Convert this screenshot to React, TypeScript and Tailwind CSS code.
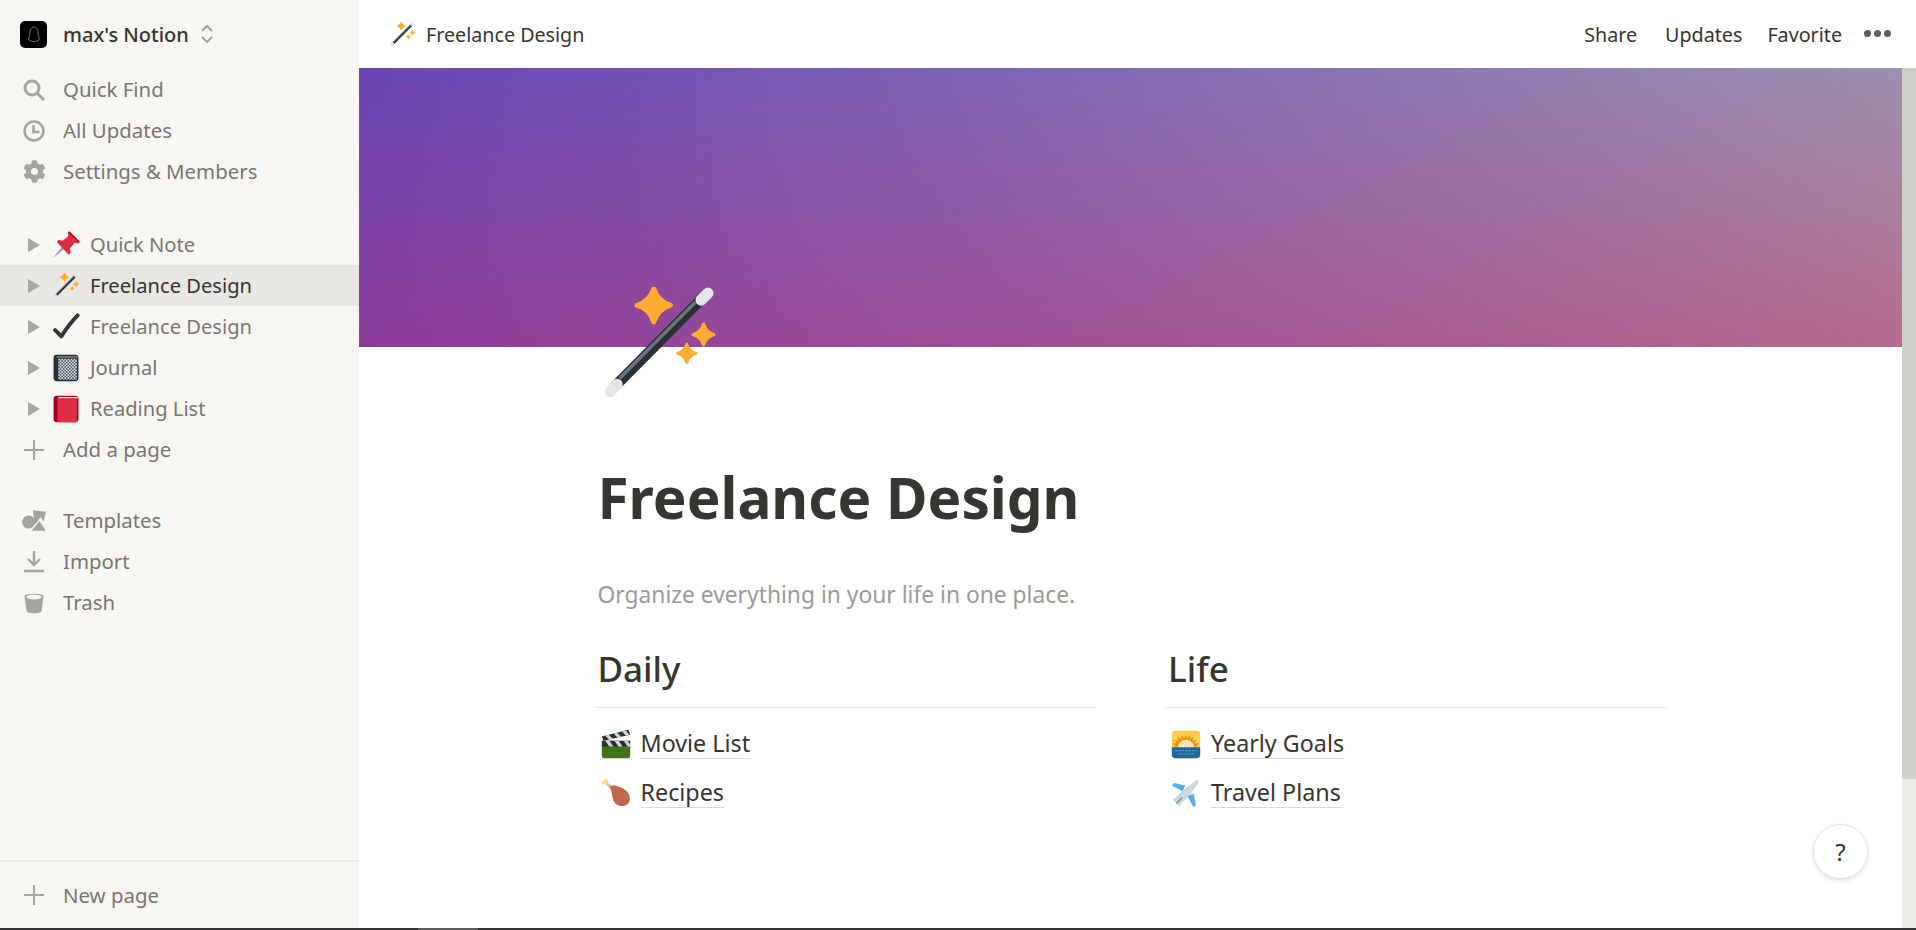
import type { ReactNode } from "react";
import { FaCog } from "react-icons/fa";

const Star = ({ x, y, r }: { x: number; y: number; r: number }) => {
  const k = r * 0.24;
  return (
    <path
      d={`M${x} ${y - r}Q${x + k} ${y - k} ${x + r} ${y}Q${x + k} ${y + k} ${x} ${y + r}Q${x - k} ${y + k} ${x - r} ${y}Q${x - k} ${y - k} ${x} ${y - r}Z`}
      fill="#ffac33"
      stroke="#ffac33"
      strokeWidth={r * 0.28}
      strokeLinejoin="round"
    />
  );
};

const Wand = ({ className }: { className: string }) => (
  <svg viewBox="0 0 36 36" className={className}>
    <line x1="3.2" y1="32.2" x2="31.8" y2="3.4" stroke="#292f33" strokeWidth="3.4" />
    <line x1="5" y1="29.4" x2="29.4" y2="4.8" stroke="#66757f" strokeWidth="1.1" />
    <line x1="2" y1="33.6" x2="4.2" y2="31.3" stroke="#e1e8ed" strokeWidth="3.6" strokeLinecap="round" />
    <line x1="31.2" y1="4.2" x2="33.4" y2="2" stroke="#e1e8ed" strokeWidth="3.6" strokeLinecap="round" />
    <Star x={16} y={5.9} r={5.4} />
    <Star x={32} y={15.3} r={3.4} />
    <Star x={26.6} y={21.3} r={3} />
  </svg>
);

const Pin = () => (
  <svg viewBox="0 0 36 36" className="w-[28px] h-[28px]">
    <path d="M1 35l12-15 3 3z" fill="#99aab5" />
    <path d="M23 1l12 12c1 1.500 0 3-2 3l-4-.5-6 7 1 5c0 2-2 3-3.500 2L7 15c-1-1.500 0-3.500 2-3.500l5 1 7-6-.5-4.500C20.500 1 22 0 23 1z" fill="#dd2e44" />
    <path d="M23 1l12 12c.5 1 .3 2-.5 2.500L20.700 3C21 1.500 22 .5 23 1z" fill="#be1931" />
  </svg>
);

const Check = () => (
  <svg viewBox="0 0 36 36" className="w-[28px] h-[28px]">
    <path d="M4 22l8 8C19 19 25 11 33 3" fill="none" stroke="#31373d" strokeWidth="5" strokeLinecap="round" strokeLinejoin="round" />
  </svg>
);

const Notebook = () => (
  <svg viewBox="0 0 36 36" className="w-[28px] h-[28px]">
    <defs>
      <pattern id="nb" width="4" height="4" patternUnits="userSpaceOnUse">
        <rect width="4" height="4" fill="#d5dde2" />
        <rect width="2" height="2" fill="#4f5b63" />
        <rect x="2" y="2" width="2" height="2" fill="#4f5b63" />
      </pattern>
    </defs>
    <rect x="2" y="1" width="32" height="34" rx="4" fill="#292f33" />
    <rect x="8" y="6" width="24" height="27" fill="url(#nb)" />
    <rect x="6" y="2.500" width="27" height="2.500" fill="#66757f" />
  </svg>
);

const RedBook = () => (
  <svg viewBox="0 0 36 36" className="w-[28px] h-[28px]">
    <rect x="2" y="1" width="32" height="34" rx="4" fill="#a0041e" />
    <rect x="8" y="2.500" width="25" height="2" fill="#ffd9d9" />
    <path d="M7 4.500h25V35H10a3 3 0 01-3-3z" fill="#dd2e44" />
  </svg>
);

const Clapper = () => (
  <svg viewBox="0 0 36 36" className="w-[30px] h-[30px]">
    <path d="M1 20h34v12a3 3 0 01-3 3H4a3 3 0 01-3-3z" fill="#3e721d" />
    <path d="M1 14h34v7H1z" fill="#292f33" />
    <path d="M5 14l5 7h5l-5-7zM16 14l5 7h5l-5-7zM27 14l5 7h3v-2l-3-5z" fill="#ccd6dd" />
    <path d="M1 9L33 1l2 6L3 14z" fill="#292f33" />
    <path d="M5 8l5 5 4.500-1-5-5zM15 5.500l5 5 4.500-1-5-5zM25 3l5 5 4-1-4-5z" fill="#ccd6dd" />
  </svg>
);

const Drumstick = () => (
  <svg viewBox="0 0 36 36" className="w-[30px] h-[30px]">
    <path d="M5 5l9 8" stroke="#f4c58a" strokeWidth="3.400" />
    <circle cx="3.500" cy="5.500" r="2.400" fill="#ffd983" />
    <circle cx="6" cy="3.500" r="2.400" fill="#ffd983" />
    <path d="M10 10c6-3 15 1 21 6 5 5 5 13 0 16-5 3-13 2-16-5-2-6-2-12-5-17z" fill="#c1694f" />
  </svg>
);

const Sunrise = () => (
  <svg viewBox="0 0 36 36" className="w-[30px] h-[30px]">
    <rect x="1" y="2" width="34" height="33" rx="4" fill="#ffcc4d" />
    <path d="M18 7l1.500 4 3-3.500.5 4.500 4-2.500-1 4.500 4.500-1-2 4 4.500.5-3 4H5l-3-4 4.500-.5-2-4 4.500 1-1-4.500 4 2.500.5-4.500 3 3.500z" fill="#f4900c" />
    <path d="M8 23a10 10 0 0120 0z" fill="#ffe8b6" />
    <path d="M1 22h34v9a4 4 0 01-4 4H5a4 4 0 01-4-4z" fill="#226699" />
    <path d="M5 26h26M8 30h20" stroke="#55acee" strokeWidth="1" strokeDasharray="3 1" />
  </svg>
);

const Plane = () => (
  <svg viewBox="0 0 36 36" className="w-[30px] h-[30px]">
    <path d="M30 3c3-1 4 0 3 3L22 21 12 31l-2 3-2-2-4-4-2-2 3-2 10-10z" fill="#ccd6dd" />
    <path d="M17 9L4 6 1 9l13 7zM27 19l3 13-3 3-7-13z" fill="#55acee" />
    <path d="M13 23l-7 7 1 1 7-7z" fill="#66757f" />
  </svg>
);

const SearchIcon = () => (
  <svg viewBox="0 0 24 24" className="w-[24px] h-[24px]" fill="none" stroke="#a5a4a0" strokeWidth="3">
    <circle cx="10" cy="10" r="7" />
    <path d="M15 15l7 7" />
  </svg>
);

const ClockIcon = () => (
  <svg viewBox="0 0 24 24" className="w-[24px] h-[24px]" fill="none" stroke="#a5a4a0" strokeWidth="2.500">
    <circle cx="12" cy="12" r="9.500" />
    <path d="M11.500 6v7h6" />
  </svg>
);

const PlusIcon = () => (
  <svg viewBox="0 0 24 24" className="w-[24px] h-[24px]" fill="none" stroke="#a5a4a0" strokeWidth="2">
    <path d="M12 2v20M2 12h20" />
  </svg>
);

const TemplatesIcon = () => (
  <svg viewBox="0 0 24 24" className="w-[26px] h-[26px]" fill="#a5a4a0">
    <circle cx="7" cy="13" r="6" />
    <path d="M11 2l12 1.500-2 9-3-4-5 7-1-5z" />
    <path d="M17 12l6 9H10z" />
  </svg>
);

const ImportIcon = () => (
  <svg viewBox="0 0 24 24" className="w-[24px] h-[24px]" fill="none" stroke="#a5a4a0" strokeWidth="2.400">
    <path d="M12 1v13M6 9l6 6 6-6M2 21h20" />
  </svg>
);

const TrashIcon = () => (
  <svg viewBox="0 0 24 24" className="w-[24px] h-[24px]">
    <path d="M2.500 5c0-3 19-3 19 0l-2 15c-.5 3-14.500 3-15 0z" fill="#a5a4a0" />
    <ellipse cx="12" cy="6" rx="7.500" ry="2.500" fill="#f7f6f3" />
  </svg>
);

const Arrow = () => (
  <span className="w-0 h-0 border-y-[7px] border-y-transparent border-l-[12px] border-l-[#a8a7a3]" />
);

const NavRow = ({ icon, label }: { icon: ReactNode; label: string }) => (
  <div className="h-[41px] flex items-center pl-[21px] text-[#787672]">
    <span className="w-[26px] flex justify-center">{icon}</span>
    <span className="ml-[16px]">{label}</span>
  </div>
);

const PageRow = ({ icon, label, active }: { icon: ReactNode; label: string; active?: boolean }) => (
  <div className={`h-[41px] flex items-center pl-[28px] text-[20.15px] ${active ? "bg-[#e8e7e4] text-[#37352f]" : "text-[#787672]"}`}>
    <Arrow />
    <span className="w-[28px] ml-[12px] flex justify-center">{icon}</span>
    <span className="ml-[10px]">{label}</span>
  </div>
);

const LinkRow = ({ icon, label }: { icon: ReactNode; label: string }) => (
  <div className="h-[49px] flex items-center pl-[6px]">
    <span className="w-[30px] flex justify-center">{icon}</span>
    <span className="ml-[10px] text-[23.3px] leading-[30px] text-[#37352f] border-b border-[#d9d9d6]">{label}</span>
  </div>
);

const Column = ({ title, children }: { title: string; children: ReactNode }) => (
  <div>
    <h2 className="pl-[3px] h-[50px] text-[35px] leading-[50px] font-medium text-[#37352f]">{title}</h2>
    <div className="mt-[13px] mb-[11px] h-px bg-[#e9e9e7]" />
    {children}
  </div>
);

export default function App() {
  return (
    <div className="w-[1916px] h-[930px] overflow-hidden flex flex-col bg-white font-['Noto_Sans',sans-serif]">
      <div className="flex-1 flex min-h-0">
        {/* sidebar */}
        <aside className="w-[359px] shrink-0 flex flex-col bg-[#f7f6f3] text-[20.4px]">
          <div className="h-[68px] flex items-center pl-[20px]">
            <div className="w-[27px] h-[27px] rounded-[5px] bg-black flex items-center justify-center">
              <svg viewBox="0 0 20 20" className="w-[20px] h-[20px]" fill="none" stroke="#777" strokeWidth="1">
                <path d="M10 3c-3 0-4 3-4 6s-2 5-1 7c2 2 8 2 10 0 1-2-1-4-1-7s-1-6-4-6z" />
              </svg>
            </div>
            <span className="ml-[16px] pt-[2px] text-[20px] text-[#37352f] font-medium">max's Notion</span>
            <svg viewBox="0 0 14 20" className="ml-[11px] w-[14px] h-[20px]" fill="none" stroke="#a5a4a0" strokeWidth="2">
              <path d="M2 7l5-5 5 5M2 13l5 5 5-5" />
            </svg>
          </div>
          <div className="pt-[1px]">
            <NavRow icon={<SearchIcon />} label="Quick Find" />
            <NavRow icon={<ClockIcon />} label="All Updates" />
            <NavRow icon={<FaCog className="w-[23px] h-[23px] text-[#a5a4a0]" />} label="Settings & Members" />
          </div>
          <div className="h-[32px]" />
          <PageRow icon={<Pin />} label="Quick Note" />
          <PageRow icon={<Wand className="w-[26px] h-[26px]" />} label="Freelance Design" active />
          <PageRow icon={<Check />} label="Freelance Design" />
          <PageRow icon={<Notebook />} label="Journal" />
          <PageRow icon={<RedBook />} label="Reading List" />
          <NavRow icon={<PlusIcon />} label="Add a page" />
          <div className="h-[30px]" />
          <NavRow icon={<TemplatesIcon />} label="Templates" />
          <NavRow icon={<ImportIcon />} label="Import" />
          <NavRow icon={<TrashIcon />} label="Trash" />
          <div className="flex-1" />
          <div className="h-[68px] border-t-2 border-[#ebeae7] flex items-center">
            <div className="w-full">
              <NavRow icon={<PlusIcon />} label="New page" />
            </div>
          </div>
        </aside>

        <main className="flex-1 flex flex-col min-w-0 relative">
          {/* top bar */}
          <header className="h-[68px] shrink-0 flex items-center text-[19.7px] text-[#37352f]">
            <Wand className="ml-[31px] w-[25px] h-[25px]" />
            <span className="ml-[11px] pt-[2px]">Freelance Design</span>
            <div className="ml-auto flex items-center pr-[25px] pt-[2px]">
              <span>Share</span>
              <span className="ml-[28px]">Updates</span>
              <span className="ml-[25px]">Favorite</span>
              <div className="ml-[22px] -mt-[2px] flex gap-[3px]">
                <span className="w-[7px] h-[7px] rounded-full bg-[#5f5e5b]" />
                <span className="w-[7px] h-[7px] rounded-full bg-[#5f5e5b]" />
                <span className="w-[7px] h-[7px] rounded-full bg-[#5f5e5b]" />
              </div>
            </div>
          </header>

          <div className="flex-1 flex min-h-0">
            <div className="flex-1 min-w-0">
              {/* cover */}
              <div className="h-[279px] relative bg-gradient-to-b from-[#6a45b5] to-[#8a3b9a]">
                <div className="absolute inset-0 bg-gradient-to-b from-[#a092b0] to-[#b46a8e] [mask-image:linear-gradient(100deg,transparent,black)]" />
              </div>

              <div className="w-[1072px] mx-auto">
                <Wand className="relative -mt-[60px] ml-[9px] w-[112px] h-[112px]" />
                <h1 className="mt-[57px] pl-[3px] h-[82px] text-[56.7px] leading-[82px] font-bold text-[#37352f]">Freelance Design</h1>
                <p className="mt-[40px] pl-[3px] h-[34px] text-[22.8px] leading-[34px] text-[#9b9a97]">Organize everything in your life in one place.</p>
                <div className="mt-[32px] grid grid-cols-2 gap-x-[69px]">
                  <Column title="Daily">
                    <LinkRow icon={<Clapper />} label="Movie List" />
                    <LinkRow icon={<Drumstick />} label="Recipes" />
                  </Column>
                  <Column title="Life">
                    <LinkRow icon={<Sunrise />} label="Yearly Goals" />
                    <LinkRow icon={<Plane />} label="Travel Plans" />
                  </Column>
                </div>
              </div>
            </div>

            {/* scrollbar */}
            <div className="w-[14px] shrink-0 bg-[#ecebe7]">
              <div className="h-[711px] bg-[#cfcfca]" />
            </div>
          </div>

          <button className="absolute right-[48px] bottom-[49px] w-[55px] h-[55px] rounded-full bg-white border border-[#e6e6e4] shadow-[0_2px_4px_rgba(15,15,15,0.12)] text-[24px] text-[#37352f]">
            ?
          </button>
        </main>
      </div>

      {/* window edge */}
      <div className="h-[2px] shrink-0 bg-[#333] pl-[418px]">
        <div className="w-[60px] h-full bg-[#5c5c5c]" />
      </div>
    </div>
  );
}
